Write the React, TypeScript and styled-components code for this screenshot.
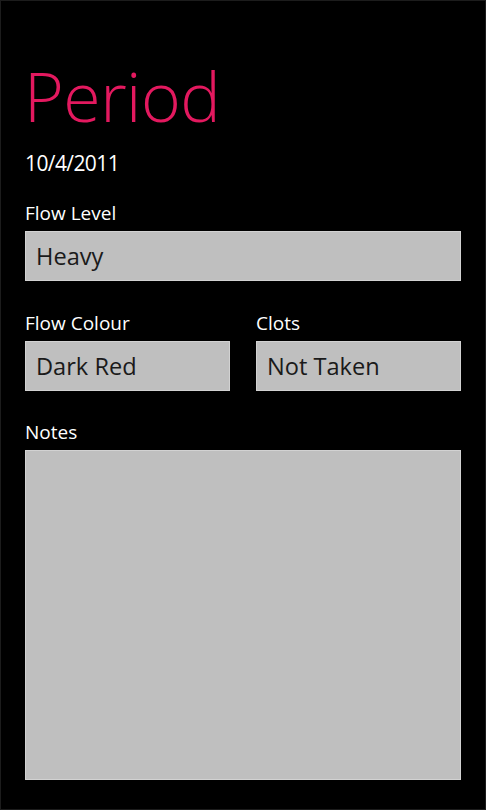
import React from "react";
import styled, { createGlobalStyle } from "styled-components";

const Global = createGlobalStyle`
  html, body { margin: 0; padding: 0; background: #000; }
  * { box-sizing: border-box; }
`;

const Page = styled.div`
  width: 486px;
  height: 810px;
  background: #000;
  border: 1px solid #1c1c1c;
  padding: 0 24px 0 24px;
  font-family: "Open Sans", "Noto Sans", sans-serif;
  display: flex;
  flex-direction: column;
  overflow: hidden;
`;

const Title = styled.h1`
  margin: 55px 0 0 -1px;
  font-size: 68px;
  line-height: 80px;
  font-weight: 300;
  color: #e3195f;
  letter-spacing: -0.5px;
`;

const DateText = styled.div`
  margin-top: 12px;
  font-size: 21px;
  line-height: 30px;
  letter-spacing: -0.6px;
  color: #fff;
`;

const Label = styled.div`
  font-size: 19px;
  line-height: 24px;
  color: #fff;
  margin-bottom: 6px;
`;

const Field = styled.div<{ $mt?: number; $grow?: boolean }>`
  display: flex;
  flex-direction: column;
  margin-top: ${(p) => p.$mt ?? 0}px;
  flex: ${(p) => (p.$grow ? "1 1 0" : "0 0 auto")};
  min-width: 0;
`;

const Row = styled.div`
  display: flex;
  gap: 26px;
  margin-top: 30px;
`;

const Box = styled.div<{ $h?: number }>`
  height: ${(p) => p.$h ?? 50}px;
  background: #bfbfbf;
  border: 1px solid #d2d2d2;
  padding: 0 10px;
  display: flex;
  align-items: center;
  font-size: 23.6px;
  color: #1a1a1a;
`;

export default function App() {
  return (
    <>
      <Global />
      <Page>
        <Title>Period</Title>
        <DateText>10/4/2011</DateText>
        <Field $mt={23}>
          <Label>Flow Level</Label>
          <Box>Heavy</Box>
        </Field>
        <Row>
          <Field $grow>
            <Label>Flow Colour</Label>
            <Box>Dark Red</Box>
          </Field>
          <Field $grow>
            <Label>Clots</Label>
            <Box>Not Taken</Box>
          </Field>
        </Row>
        <Field $mt={29}>
          <Label>Notes</Label>
          <Box $h={330} />
        </Field>
      </Page>
    </>
  );
}
